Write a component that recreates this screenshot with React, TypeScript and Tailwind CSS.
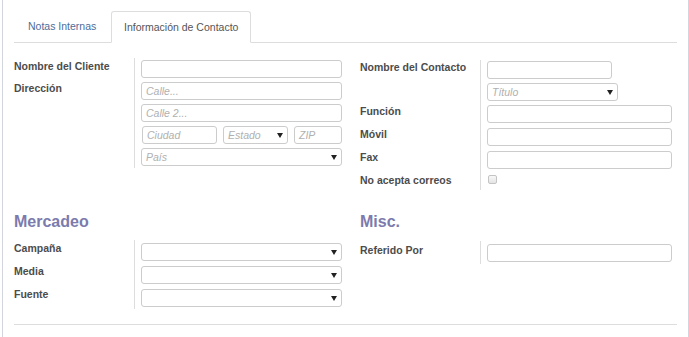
import React from "react";

const Arrow = () => (
  <svg
    className="absolute right-[4px] top-[6px]"
    width="6"
    height="5"
    viewBox="0 0 6 5"
  >
    <polygon points="0,0 6,0 3,5" fill="#222" />
  </svg>
);

function Box({
  placeholder,
  select,
  className = "",
}: {
  placeholder?: string;
  select?: boolean;
  className?: string;
}) {
  return (
    <div
      className={
        "relative h-[18px] border border-[#cccccc] rounded-[3px] bg-white pl-[4px] text-[10.5px] leading-[16px] italic text-[#b0b0b0] " +
        className
      }
    >
      {placeholder}
      {select && <Arrow />}
    </div>
  );
}

const Label = ({ children, pt = "pt-[2px]" }: { children?: React.ReactNode; pt?: string }) => (
  <div className={"text-[10.5px] leading-[13px] font-bold text-[#4c4c4c] " + pt}>{children}</div>
);

export default function App() {
  return (
    <div className="w-[689px] h-[337px] bg-white overflow-hidden font-['Liberation_Sans',Arial,sans-serif]">
      <div className="ml-[2px] w-[687px] h-[337px] border-l border-r border-[#d3d5de] pl-[11px] pr-[11px] pt-[11px]">
        {/* Tabs */}
        <div className="flex border-b border-[#dddddd] h-[32px]">
          <div className="w-[97px] pl-[14px] pt-[9px] text-[10.5px] leading-[13px] text-[#4d6d9a]">
            Notas Internas
          </div>
          <div className="-mb-px h-[32px] border border-[#dddddd] border-b-white bg-white rounded-t-[3px] px-[12px] pt-[9px] text-[10.5px] leading-[13px] text-[#555555]">
            Información de Contacto
          </div>
        </div>

        {/* Top section */}
        <div className="grid grid-cols-[331px_331px] mt-[15px] items-start">
          {/* Left */}
          <div className="grid grid-cols-[120px_1fr] pr-[3px]">
            <Label>Nombre del Cliente</Label>
            <div className="border-l border-[#dddddd] pl-[6px] pt-[2px] pb-[2px]">
              <Box />
            </div>
            <Label>Dirección</Label>
            <div className="border-l border-[#dddddd] pl-[6px] pt-[2px] pb-[2px]">
              <Box placeholder="Calle..." />
            </div>
            <div />
            <div className="border-l border-[#dddddd] pl-[6px] pt-[2px] pb-[2px]">
              <Box placeholder="Calle 2..." />
            </div>
            <div />
            <div className="border-l border-[#dddddd] pl-[6px] pt-[2px] pb-[2px] flex">
              <Box placeholder="Ciudad" className="w-[75px] ml-[1px]" />
              <Box placeholder="Estado" select className="w-[65px] ml-[6px]" />
              <Box placeholder="ZIP" className="w-[48px] ml-[6px]" />
            </div>
            <div />
            <div className="border-l border-[#dddddd] pl-[6px] pt-[2px] pb-[2px]">
              <Box placeholder="País" select />
            </div>
          </div>

          {/* Right */}
          <div className="grid grid-cols-[120px_1fr] pl-[15px] pr-[4px] pt-[2px]">
            <Label pt="pt-[1px]">Nombre del Contacto</Label>
            <div className="border-l border-[#dddddd] pl-[6px] pt-[1px] pb-[3px]">
              <Box className="w-[125px]" />
            </div>
            <div />
            <div className="border-l border-[#dddddd] pl-[6px] pt-[1px] pb-[3px]">
              <Box placeholder="Título" select className="w-[131px]" />
            </div>
            <Label pt="pt-[1px]">Función</Label>
            <div className="border-l border-[#dddddd] pl-[6px] pt-[1px] pb-[4px]">
              <Box />
            </div>
            <Label pt="pt-[1px]">Móvil</Label>
            <div className="border-l border-[#dddddd] pl-[6px] pt-[1px] pb-[4px]">
              <Box />
            </div>
            <Label pt="pt-[1px]">Fax</Label>
            <div className="border-l border-[#dddddd] pl-[6px] pt-[1px] pb-[4px]">
              <Box />
            </div>
            <Label pt="pt-[1px]">No acepta correos</Label>
            <div className="border-l border-[#dddddd] pl-[6px] pt-[2px] pb-[6px]">
              <div className="w-[9px] h-[9px] ml-[1px] border border-[#c4c4c4] rounded-[2px] bg-gradient-to-b from-[#f8f8f8] to-[#e4e4e4]" />
            </div>
          </div>
        </div>

        {/* Second section */}
        <div className="grid grid-cols-[331px_331px] mt-[23px] items-start">
          <div className="pr-[3px]">
            <div className="text-[16px] leading-[18px] font-bold text-[#7c7bad]">Mercadeo</div>
            <div className="grid grid-cols-[120px_1fr] mt-[9px]">
              <Label>Campaña</Label>
              <div className="border-l border-[#dddddd] pl-[6px] pt-[3px] pb-[2px]">
                <Box select />
              </div>
              <Label>Media</Label>
              <div className="border-l border-[#dddddd] pl-[6px] pt-[3px] pb-[2px]">
                <Box select />
              </div>
              <Label>Fuente</Label>
              <div className="border-l border-[#dddddd] pl-[6px] pt-[3px] pb-[2px]">
                <Box select />
              </div>
            </div>
          </div>
          <div className="pl-[15px] pr-[4px]">
            <div className="text-[16px] leading-[18px] font-bold text-[#7c7bad]">Misc.</div>
            <div className="grid grid-cols-[120px_1fr] mt-[10px]">
              <Label pt="pt-[3px]">Referido Por</Label>
              <div className="border-l border-[#dddddd] pl-[6px] pt-[3px] pb-[2px]">
                <Box />
              </div>
            </div>
          </div>
        </div>

        <div className="mt-[15px] border-t border-[#dddddd]" />
      </div>
    </div>
  );
}
